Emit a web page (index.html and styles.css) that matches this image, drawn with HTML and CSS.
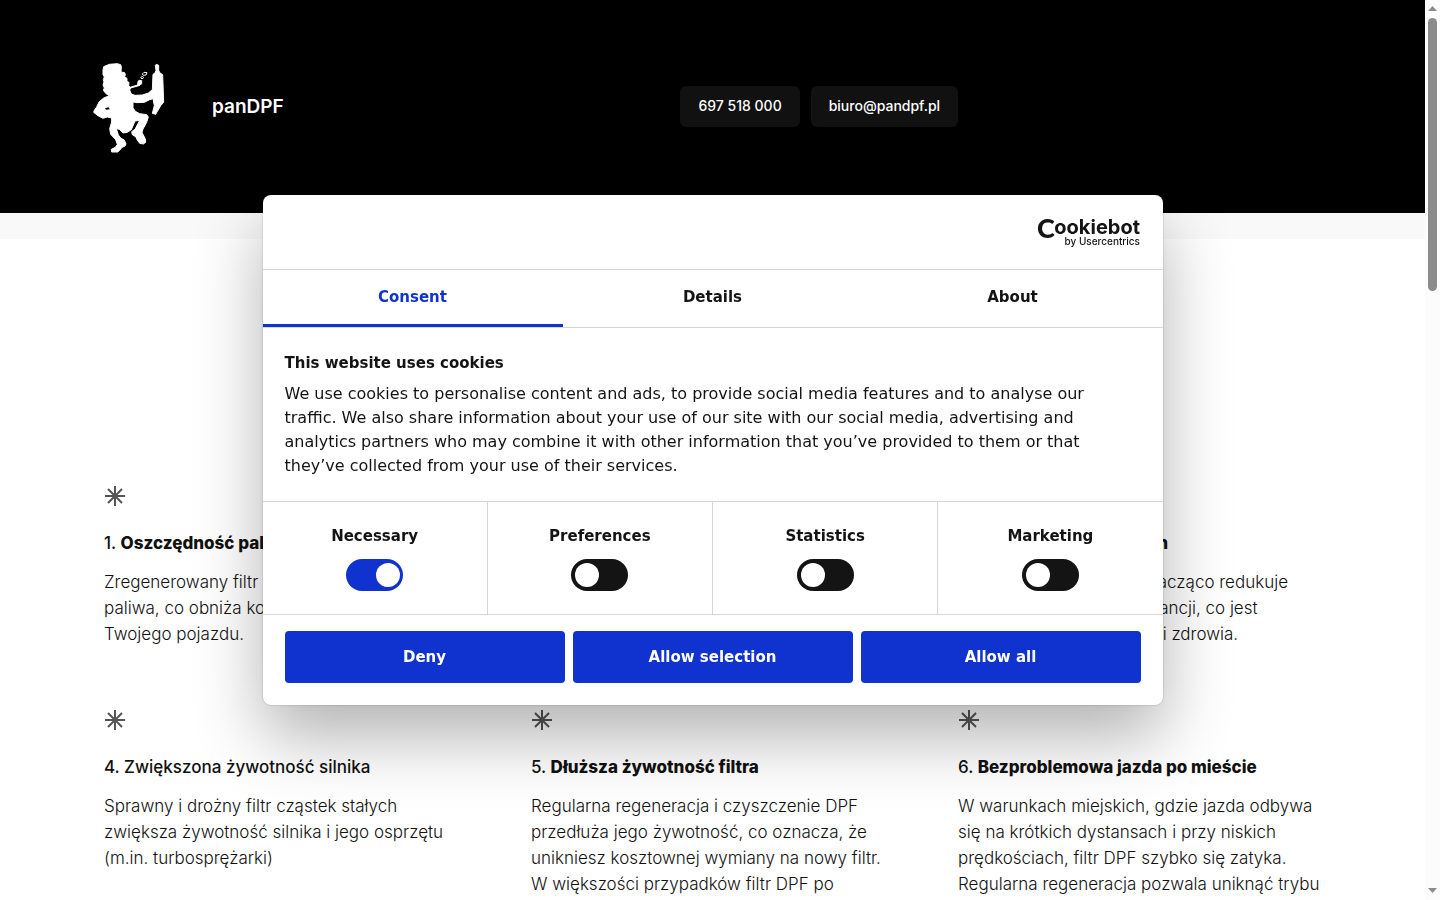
FILE: index.html
```html
<!DOCTYPE html>
<html lang="pl">
<head>
  <meta charset="UTF-8" />
  <meta name="viewport" content="width=device-width, initial-scale=1.0"/>
  <title>panDPF</title>
  <link rel="stylesheet" href="styles.css">
</head>
<body>

  <svg class="symbols" aria-hidden="true">
    <symbol id="star" viewBox="0 0 22 22">
      <path d="M11 1v20M1 11h20M4 4l14 14M18 4L4 18" fill="none" stroke="#555" stroke-width="2"/>
    </symbol>
  </svg>

  <header class="header">
    <div class="header-inner">
      <a class="brand" href="#">
        <svg class="brand-logo" viewBox="36 30 222 282" fill="#fff" aria-hidden="true">
          <path stroke="#fff" stroke-width="3" stroke-linejoin="round" d="M69 60L71 50L88 43L112 41L122 44L124 50L123 66L134 68L136 74L134 81L141 85L141 92L147 98L146 106L150 112L173 105L174 94L178 91L185 92L185 101L180 106L152 114L149 120L154 132L165 136L187 135L205 129L217 119L219 73L225 69L228 61L226 46L229 43L236 46L236 61L240 69L248 74L251 157L242 167L227 193L217 190L223 167L219 146L209 149L193 157L171 158L159 156L159 174L166 184L179 191L200 194L205 201L200 217L189 237L186 247L196 267L197 277L190 282L179 280L171 269L168 261L157 254L155 245L165 238L179 211L165 213L154 239L142 247L129 249L118 238L109 236L115 255L123 265L133 270L138 282L135 288L126 292L119 301L113 306L95 306L94 298L106 292L112 283L107 269L92 253L89 236L95 216L95 204L82 201L69 205L54 197L41 187L43 181L50 171L57 156L71 144L88 137L78 131L70 121L73 114L69 105L72 96L70 89L73 81L69 74Z"/>
          <path d="M75 175L86 172L89 178L78 179Z" fill="#000"/>
          <path d="M187 72L192 67L201 68L198 75L190 76ZM182 82L188 79L191 83L186 87Z" fill="none" stroke="#fff" stroke-width="3"/>
        </svg>
        <span class="brand-name">panDPF</span>
      </a>
      <nav class="contact">
        <a href="tel:697518000">697 518 000</a>
        <a href="mailto:biuro@pandpf.pl">biuro@pandpf.pl</a>
      </nav>
    </div>
  </header>

  <main class="content">
    <div class="cards">
      <article class="card">
        <svg class="star"><use href="#star"/></svg>
        <h3>1. <strong>Oszczędność paliwa</strong></h3>
        <p>Zregenerowany filtr zmniejsza zużycie<br>paliwa, co obniża koszty użytkowania<br>Twojego pojazdu.</p>
      </article>
      <article class="card">
        <svg class="star"><use href="#star"/></svg>
        <h3>2. <strong>Lepsza moc silnika</strong></h3>
        <p>Drożny filtr przywraca pełną moc silnika i poprawia komfort jazdy.</p>
      </article>
      <article class="card">
        <svg class="star"><use href="#star"/></svg>
        <h3>3. <strong>Mniejsza emisja spalin</strong></h3>
        <p>Regeneracja filtra DPF znacząco redukuje<br>emisję szkodliwych substancji, co jest<br>korzystne dla środowiska i zdrowia.</p>
      </article>
      <article class="card">
        <svg class="star"><use href="#star"/></svg>
        <h3>4. Zwiększona żywotność silnika</h3>
        <p>Sprawny i drożny filtr cząstek stałych zwiększa żywotność silnika i jego osprzętu (m.in. turbosprężarki)</p>
      </article>
      <article class="card">
        <svg class="star"><use href="#star"/></svg>
        <h3>5. <strong>Dłuższa żywotność filtra</strong></h3>
        <p>Regularna regeneracja i czyszczenie DPF przedłuża jego żywotność, co oznacza, że unikniesz kosztownej wymiany na nowy filtr. W większości przypadków filtr DPF po</p>
      </article>
      <article class="card">
        <svg class="star"><use href="#star"/></svg>
        <h3>6. <strong>Bezproblemowa jazda po mieście</strong></h3>
        <p>W warunkach miejskich, gdzie jazda odbywa się na krótkich dystansach i przy niskich prędkościach, filtr DPF szybko się zatyka. Regularna regeneracja pozwala uniknąć trybu</p>
      </article>
    </div>
  </main>

  <div class="overlay">
    <div class="dialog" role="dialog" aria-labelledby="cookieTitle" lang="en">
      <div class="dialog-head">
        <svg class="cookiebot" viewBox="0 0 104 34" role="img" aria-label="Cookiebot by Usercentrics">
          <text class="cb-big" x="0" y="22">C</text>
          <text class="cb-name" x="103" y="18" text-anchor="end">ookiebot</text>
          <text class="cb-by" x="103" y="29" text-anchor="end">by Usercentrics</text>
        </svg>
      </div>

      <div class="tabs" role="tablist">
        <button class="tab active" role="tab" aria-selected="true">Consent</button>
        <button class="tab" role="tab" aria-selected="false">Details</button>
        <button class="tab" role="tab" aria-selected="false">About</button>
      </div>

      <div class="dialog-text">
        <h2 id="cookieTitle">This website uses cookies</h2>
        <p>We use cookies to personalise content and ads, to provide social media features and to analyse our traffic. We also share information about your use of our site with our social media, advertising and analytics partners who may combine it with other information that you’ve provided to them or that they’ve collected from your use of their services.</p>
      </div>

      <div class="switches">
        <label class="switch">Necessary <input type="checkbox" checked></label>
        <label class="switch">Preferences <input type="checkbox"></label>
        <label class="switch">Statistics <input type="checkbox"></label>
        <label class="switch">Marketing <input type="checkbox"></label>
      </div>

      <div class="actions">
        <button>Deny</button>
        <button>Allow selection</button>
        <button>Allow all</button>
      </div>
    </div>
  </div>

  <div class="scrollbar" aria-hidden="true">
    <svg viewBox="0 0 15 18"><path d="M3 11h9L7.500 6z"/></svg>
    <div class="scrollbar-thumb"></div>
    <svg class="scrollbar-down" viewBox="0 0 15 18"><path d="M3 6h9L7.500 11z"/></svg>
  </div>

</body>
</html>
```
FILE: styles.css
```css
* {
  box-sizing: border-box;
}

html {
  height: 100%;
  overflow: hidden;
}

body {
  margin: 0;
  padding-right: 15px;
  height: 100%;
  overflow: hidden;
  font-family: Inter, "Noto Sans", sans-serif;
  font-size: 17px;
  line-height: 26px;
  color: #111;
  background: #fff;
}

h2, h3, p {
  margin: 0;
}

.symbols {
  display: none;
}

/* Header */
.header {
  background: #000;
  border-bottom: 26px solid #f9f9f9;
}

.header-inner {
  display: grid;
  grid-template-columns: 19fr 21fr;
  align-items: center;
  max-width: 1281px;
  min-height: 213px;
  margin: 0 auto;
}

.brand {
  display: flex;
  align-items: center;
  gap: 46px;
  padding-left: 20px;
  color: #fff;
  text-decoration: none;
}

.brand-logo {
  width: 74px;
  height: 94px;
}

.brand-name {
  font-size: 19px;
  font-weight: 600;
}

.contact {
  display: flex;
  gap: 11px;
}

.contact a {
  padding: 7px 18px 8px;
  border-radius: 6px;
  background: #111;
  color: #fff;
  font-size: 14px;
  font-weight: 500;
  text-decoration: none;
}

/* Cards */
.content {
  max-width: 1281px;
  margin: 0 auto;
  padding: 246px 0 64px;
}

.cards {
  display: grid;
  grid-template-columns: repeat(3, 1fr);
  row-gap: 62px;
}

.card {
  padding: 0 32px;
}

.card p {
  font-weight: 300;
}

.star {
  display: block;
  width: 22px;
  height: 22px;
  margin-bottom: 23px;
}

.card h3 {
  margin-bottom: 13px;
  font-size: 17px;
  font-weight: 500;
}

.card strong {
  font-weight: 800;
}

/* Cookie dialog */
.overlay {
  position: fixed;
  inset: 0 15px 0 0;
  display: flex;
  align-items: center;
  justify-content: center;
}

.dialog {
  width: 900px;
  max-width: 100%;
  border-radius: 8px;
  background: #fff;
  box-shadow: 0 32px 68px rgba(0, 0, 0, 0.3), 0 0 2px rgba(0, 0, 0, 0.3);
  font-family: "DejaVu Sans", sans-serif;
  font-size: 15px;
  line-height: 24px;
  color: #141414;
}

.dialog-head {
  display: flex;
  justify-content: flex-end;
  padding: 21px 22px 19px;
  border-bottom: 1px solid #d6d6d6;
}

.cookiebot {
  width: 104px;
  height: 34px;
  overflow: visible;
  fill: #141414;
  font-family: Inter, sans-serif;
}

.cb-big {
  font-family: Lato, sans-serif;
  font-size: 27px;
  font-weight: 900;
}

.cb-name {
  font-size: 20px;
  font-weight: 700;
}

.cb-by {
  font-size: 10px;
  font-weight: 500;
}

.tabs {
  display: flex;
  border-bottom: 1px solid #d6d6d6;
}

.tab {
  flex: 1;
  padding: 15px 0;
  border: 0;
  border-bottom: 3px solid transparent;
  background: none;
  color: #141414;
  font: inherit;
  font-weight: 700;
}

.tab.active {
  border-color: #1032cf;
  color: #1032cf;
}

.dialog-text {
  padding: 23px 44px 23px 22px;
  border-bottom: 1px solid #d6d6d6;
}

.dialog-text h2 {
  margin-bottom: 7px;
  font-size: 15px;
  font-weight: 700;
}

.dialog-text p {
  font-size: 16px;
}

.switches {
  display: flex;
  border-bottom: 1px solid #d6d6d6;
}

.switch {
  flex: 1;
  display: flex;
  flex-direction: column;
  align-items: center;
  gap: 11px;
  padding: 22px 0 23px;
  font-weight: 700;
}

.switch + .switch {
  border-left: 1px solid #d6d6d6;
}

.switch input {
  appearance: none;
  width: 57px;
  height: 32px;
  margin: 0;
  padding: 4px;
  border-radius: 16px;
  background: #141414;
}

.switch input::before {
  content: "";
  display: block;
  width: 24px;
  height: 24px;
  border-radius: 50%;
  background: #fff;
}

.switch input:checked {
  padding-right: 3px;
  background: #1032cf;
}

.switch input:checked::before {
  margin-left: auto;
}

.actions {
  display: flex;
  gap: 8px;
  padding: 16px 22px 22px;
}

.actions button {
  flex: 1;
  height: 52px;
  border: 0;
  border-radius: 4px;
  background: #1032cf;
  color: #fff;
  font: inherit;
  font-weight: 700;
}

/* Scrollbar */
.scrollbar {
  position: fixed;
  inset: 0 0 0 auto;
  display: flex;
  flex-direction: column;
  width: 15px;
  background: #fcfcfc;
  fill: #8b8b8b;
}

.scrollbar svg {
  width: 15px;
  height: 18px;
}

.scrollbar-thumb {
  height: 273px;
  margin: 0 3px;
  border-radius: 5px;
  background: #8b8b8b;
}

.scrollbar-down {
  margin-top: auto;
}
```
